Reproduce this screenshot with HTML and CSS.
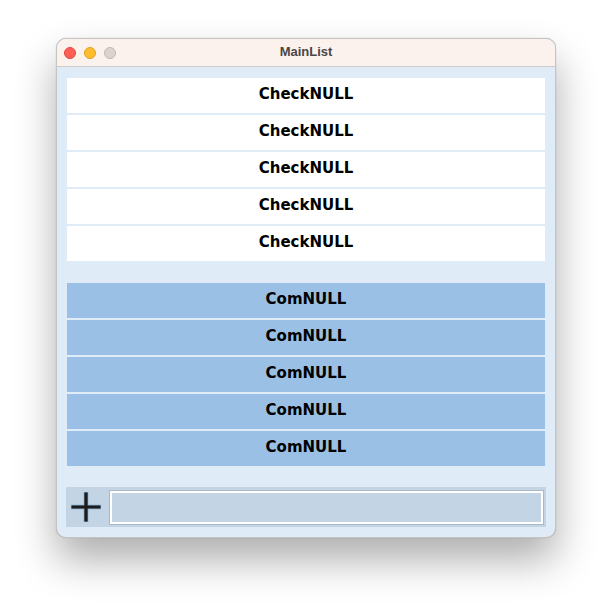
FILE: index.html
```html
<!DOCTYPE html>
<html>
<head>
<meta charset="utf-8">
<link rel="stylesheet" href="styles.css">
</head>
<body>
<div class="window">
  <div class="titlebar">
    <div class="lights">
      <span class="light red"></span>
      <span class="light yellow"></span>
      <span class="light gray"></span>
    </div>
    <div class="title">MainList</div>
  </div>
  <div class="content">
    <div class="list">
      <div class="row check">CheckNULL</div>
      <div class="row check">CheckNULL</div>
      <div class="row check">CheckNULL</div>
      <div class="row check">CheckNULL</div>
      <div class="row check">CheckNULL</div>
    </div>
    <div class="list second">
      <div class="row com">ComNULL</div>
      <div class="row com">ComNULL</div>
      <div class="row com">ComNULL</div>
      <div class="row com">ComNULL</div>
      <div class="row com">ComNULL</div>
    </div>
    <div class="bottom">
      <div class="plus">
        <svg width="30" height="30" viewBox="0 0 30 30">
          <path d="M15 0 V30 M0 15 H30" stroke="#7fa3c4" stroke-width="4.6" fill="none"/>
          <path d="M15 0.5 V29.5 M0.5 15 H29.5" stroke="#1c1c1c" stroke-width="3.2" fill="none"/>
        </svg>
      </div>
      <div class="field"></div>
    </div>
  </div>
</div>
</body>
</html>
```

FILE: styles.css
```css
html, body {
  margin: 0;
  padding: 0;
  background: #ffffff;
}
body {
  box-sizing: border-box;
  padding: 38px 56px;
  width: 612px;
  height: 612px;
  overflow: hidden;
}
.window {
  width: 500px;
  height: 500px;
  box-sizing: border-box;
  border: 1px solid #c4c4c4;
  border-radius: 10px;
  overflow: hidden;
  display: flex;
  flex-direction: column;
  box-shadow: 0 22px 40px rgba(0, 0, 0, 0.32), 0 0 1px rgba(0,0,0,0.3);
  background: #dfecf8;
}
.titlebar {
  height: 28px;
  flex: none;
  box-sizing: border-box;
  background: #fbf2ee;
  border-bottom: 1px solid #cfcac8;
  display: flex;
  align-items: center;
  position: relative;
}
.lights {
  display: flex;
  gap: 8px;
  padding-left: 7px;
}
.light {
  width: 12px;
  height: 12px;
  box-sizing: border-box;
  border-radius: 50%;
  display: block;
}
.red { background: #fe5f57; border: 1px solid #e2463f; }
.yellow { background: #febc2e; border: 1px solid #dea123; }
.gray { background: #dbd3cf; border: 1px solid #bfb7b3; }
.title {
  position: absolute;
  left: 0;
  right: 0;
  top: 0;
  bottom: 0;
  display: flex;
  align-items: center;
  justify-content: center;
  font-family: "Liberation Sans", Arial, sans-serif;
  font-weight: bold;
  font-size: 13px;
  color: #4a4646;
  padding-bottom: 2px;
}
.content {
  flex: 1;
  padding: 11px 10px 0 10px;
  display: flex;
  flex-direction: column;
}
.list {
  display: flex;
  flex-direction: column;
  gap: 2px;
}
.second {
  margin-top: 22px;
}
.row {
  height: 35px;
  box-sizing: border-box;
  padding-bottom: 3px;
  display: flex;
  align-items: center;
  justify-content: center;
  font-family: "DejaVu Sans", Verdana, sans-serif;
  font-weight: bold;
  font-size: 15px;
  color: #000;
}
.check { background: #ffffff; }
.com { background: #9bc0e6; }
.bottom {
  margin: 21px -1px 0 -1px;
  height: 40px;
  background: #c3d5e5;
  display: flex;
  align-items: center;
  padding: 0 3px 0 5px;
}
.plus {
  width: 30px;
  height: 30px;
  flex: none;
}
.plus svg { display: block; }
.field {
  margin-left: 9px;
  flex: 1;
  height: 33px;
  box-sizing: border-box;
  background: #c3d4e4;
  border: 2px solid #ffffff;
  box-shadow: 0 0 0 1px #aab9c8;
}
```
